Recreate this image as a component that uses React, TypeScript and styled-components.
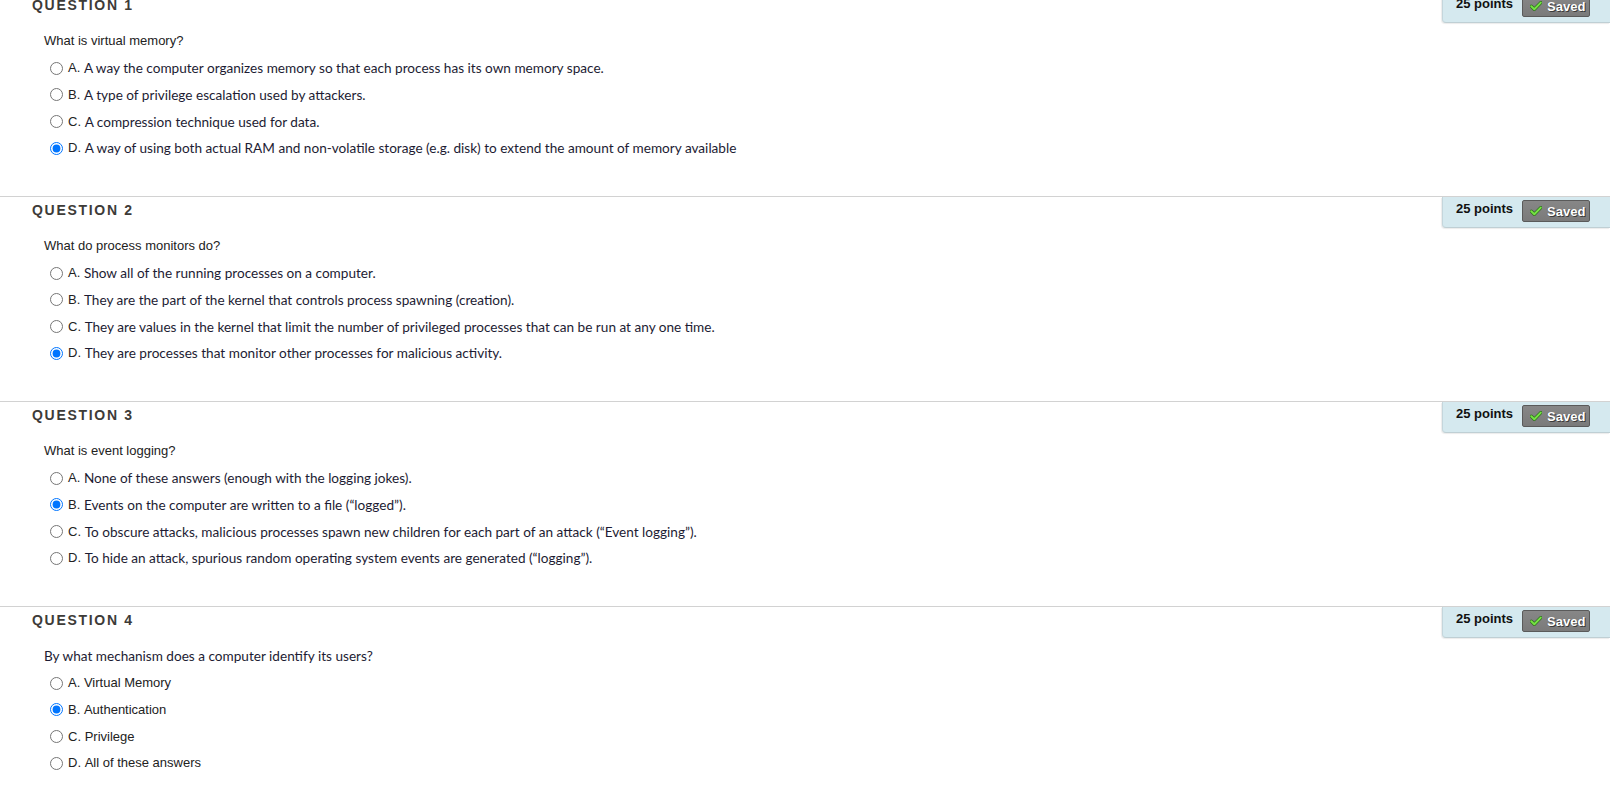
import React from "react";
import styled, { createGlobalStyle } from "styled-components";

const GlobalStyle = createGlobalStyle`
  html, body { margin: 0; padding: 0; background: #ffffff; }
  body { font-family: "Liberation Sans", Arial, sans-serif; overflow: hidden; }
`;

const Page = styled.div`
  margin-top: -9px;
  width: 1610px;
`;

const Block = styled.section`
  border-top: 1px solid #d2d2d2;
  height: 205px;
  box-sizing: border-box;
`;

const Header = styled.div`
  display: flex;
  justify-content: space-between;
  align-items: flex-start;
  height: 31px;
`;

const Title = styled.h3`
  margin: 0;
  padding: 5px 0 0 32px;
  font: bold 14px/16px "Liberation Sans", Arial, sans-serif;
  letter-spacing: 1.7px;
  color: #3d3b38;
`;

const PointsBox = styled.div`
  display: flex;
  align-items: flex-start;
  gap: 9px;
  width: 168px;
  height: 31px;
  box-sizing: border-box;
  padding: 3px 0 0 13px;
  background: #d5e9ef;
  border-left: 1px solid #c4d6dc;
  border-bottom: 1px solid #bfcfd4;
  border-bottom-left-radius: 4px;
  box-shadow: -1px 1px 1px rgba(0, 0, 0, 0.08);
`;

const Points = styled.span`
  font: bold 13px/18px "Liberation Sans", Arial, sans-serif;
  color: #111;
`;

const SavedButton = styled.span`
  display: inline-flex;
  align-items: center;
  gap: 5px;
  width: 68px;
  height: 22px;
  box-sizing: border-box;
  padding-left: 7px;
  background: linear-gradient(#878787, #7a7a7a);
  border: 1px solid #5a5a5a;
  border-radius: 2px;
  font: bold 13px/1 "Liberation Sans", Arial, sans-serif;
  color: #ffffff;
  text-shadow: 1px 1px 0 #3a3a3a, -0.5px -0.5px 0 #555;
`;

const Body = styled.div`
  padding: 10px 0 0 44px;
`;

const calibriStack = `Lato, "Liberation Sans", sans-serif`;
const arialStack = `"Liberation Sans", Arial, sans-serif`;

const QuestionText = styled.p<{ $calibri?: boolean }>`
  margin: 0;
  font-size: ${(p) => (p.$calibri ? "13.6px" : "13px")};
  line-height: 16px;
  font-family: ${(p) => (p.$calibri ? calibriStack : arialStack)};
  color: ${(p) => (p.$calibri ? "#1d1c33" : "#222")};
`;

const AnswerList = styled.div`
  margin-top: 6px;
  padding-left: 6px;
`;

const AnswerRow = styled.label`
  display: flex;
  align-items: center;
  height: 26.67px;
`;

const Radio = styled.input`
  width: 13px;
  height: 13px;
  margin: 0 5px 0 0;
  flex: none;
`;

const AnswerLabel = styled.span`
  font: 13px/16px "Liberation Sans", Arial, sans-serif;
  color: #222;
  white-space: pre;
`;

const AnswerText = styled.span<{ $calibri?: boolean }>`
  font-size: ${(p) => (p.$calibri ? "13.6px" : "13px")};
  line-height: 16px;
  font-family: ${(p) => (p.$calibri ? calibriStack : arialStack)};
  color: ${(p) => (p.$calibri ? "#1d1c33" : "#222")};
`;

const CheckIcon = () => (
  <svg width="12" height="10" viewBox="0 0 12 10" aria-hidden="true">
    <path
      d="M1.3 5.3 L4.3 8.2 L10.8 1.6"
      fill="none"
      stroke="#2f6e1f"
      strokeWidth="3.4"
      strokeLinecap="round"
      strokeLinejoin="round"
    />
    <path
      d="M1.3 5.3 L4.3 8.2 L10.8 1.6"
      fill="none"
      stroke="#74e243"
      strokeWidth="2"
      strokeLinecap="round"
      strokeLinejoin="round"
    />
  </svg>
);

type Question = {
  number: number;
  text: string;
  questionCalibri: boolean;
  answersCalibri: boolean;
  answers: string[];
  selected: number;
};

const questions: Question[] = [
  {
    number: 1,
    text: "What is virtual memory?",
    questionCalibri: false,
    answersCalibri: true,
    answers: [
      "A way the computer organizes memory so that each process has its own memory space.",
      "A type of privilege escalation used by attackers.",
      "A compression technique used for data.",
      "A way of using both actual RAM and non-volatile storage (e.g. disk) to extend the amount of memory available",
    ],
    selected: 3,
  },
  {
    number: 2,
    text: "What do process monitors do?",
    questionCalibri: false,
    answersCalibri: true,
    answers: [
      "Show all of the running processes on a computer.",
      "They are the part of the kernel that controls process spawning (creation).",
      "They are values in the kernel that limit the number of privileged processes that can be run at any one time.",
      "They are processes that monitor other processes for malicious activity.",
    ],
    selected: 3,
  },
  {
    number: 3,
    text: "What is event logging?",
    questionCalibri: false,
    answersCalibri: true,
    answers: [
      "None of these answers (enough with the logging jokes).",
      "Events on the computer are written to a file (\u201Clogged\u201D).",
      "To obscure attacks, malicious processes spawn new children for each part of an attack (\u201CEvent logging\u201D).",
      "To hide an attack, spurious random operating system events are generated (\u201Clogging\u201D).",
    ],
    selected: 1,
  },
  {
    number: 4,
    text: "By what mechanism does a computer identify its users?",
    questionCalibri: true,
    answersCalibri: false,
    answers: ["Virtual Memory", "Authentication", "Privilege", "All of these answers"],
    selected: 1,
  },
];

const letters = ["A", "B", "C", "D"];

export default function App() {
  return (
    <>
      <GlobalStyle />
      <Page>
        {questions.map((q) => (
          <Block key={q.number}>
            <Header>
              <Title>QUESTION {q.number}</Title>
              <PointsBox>
                <Points>25 points</Points>
                <SavedButton>
                  <CheckIcon />
                  Saved
                </SavedButton>
              </PointsBox>
            </Header>
            <Body>
              <QuestionText $calibri={q.questionCalibri}>{q.text}</QuestionText>
              <AnswerList>
                {q.answers.map((a, i) => (
                  <AnswerRow key={i}>
                    <Radio
                      type="radio"
                      name={`q${q.number}`}
                      defaultChecked={i === q.selected}
                    />
                    <AnswerLabel>{letters[i]}. </AnswerLabel>
                    <AnswerText $calibri={q.answersCalibri}>{a}</AnswerText>
                  </AnswerRow>
                ))}
              </AnswerList>
            </Body>
          </Block>
        ))}
      </Page>
    </>
  );
}
